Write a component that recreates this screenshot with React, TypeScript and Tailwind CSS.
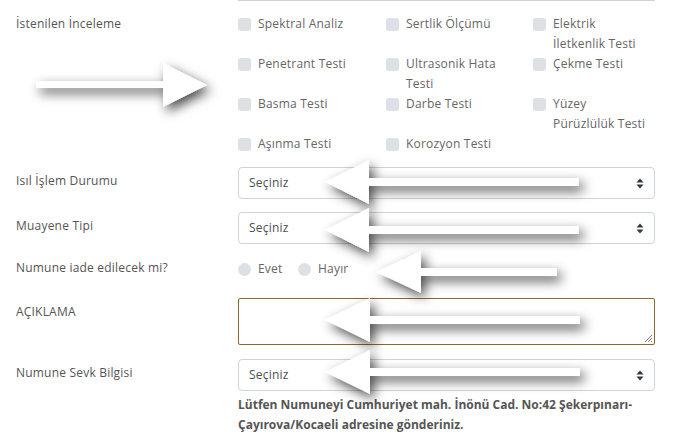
const checks: { label: string[]; h: string }[] = [
  { label: ["Spektral Analiz"], h: "h-[40px]" },
  { label: ["Sertlik Ölçümü"], h: "h-[40px]" },
  { label: ["Elektrik", "İletkenlik Testi"], h: "h-[40px]" },
  { label: ["Penetrant Testi"], h: "h-[40px]" },
  { label: ["Ultrasonik Hata", "Testi"], h: "h-[40px]" },
  { label: ["Çekme Testi"], h: "h-[40px]" },
  { label: ["Basma Testi"], h: "h-[40px]" },
  { label: ["Darbe Testi"], h: "h-[40px]" },
  { label: ["Yüzey", "Pürüzlülük Testi"], h: "h-[40px]" },
  { label: ["Aşınma Testi"], h: "h-[20px]" },
  { label: ["Korozyon Testi"], h: "h-[20px]" },
];

const SelectBox = () => (
  <div className="flex h-[32px] w-[417px] items-center justify-between rounded-[4px] border border-[#ced4da] bg-white pl-[10px] pr-[10px] text-[#495057]">
    <span>Seçiniz</span>
    <svg width="8" height="11" viewBox="0 0 8 11">
      <path d="M4 0.5 L7.5 4.5 L0.5 4.5 Z" fill="#343a40" />
      <path d="M4 10.5 L7.5 6.5 L0.5 6.5 Z" fill="#343a40" />
    </svg>
  </div>
);

const Label = ({ children, className = "" }: { children: React.ReactNode; className?: string }) => (
  <div className={`w-[222px] shrink-0 text-[#555] ${className}`}>{children}</div>
);

const leftArrow = (tip: number, cy: number, base: number, end: number, half = 22) =>
  `${tip},${cy} ${base},${cy - half} ${base},${cy - 4} ${end},${cy - 4} ${end},${cy + 4} ${base},${cy + 4} ${base},${cy + half}`;

export default function App() {
  return (
    <div
      className="relative h-[437px] w-[677px] overflow-hidden bg-white pl-[16px] text-[12px] leading-[20px] tracking-[0.2px]"
      style={{ fontFamily: '"Open Sans", "Noto Sans", sans-serif' }}
    >
      <div className="ml-[222px] w-[417px] border-t border-[#ced4da]" />

      <div className="mt-[13px] flex">
        <Label>İstenilen İnceleme</Label>
        <div className="grid w-[417px] grid-cols-[148px_147px_1fr]">
          {checks.map((c) => (
            <div key={c.label.join(" ")} className={`flex gap-[7px] ${c.h}`}>
              <span className="mt-[4px] h-[13px] w-[13px] shrink-0 rounded-[3px] bg-[#dde1e6]" />
              <span className="text-[#666]">
                {c.label.map((l) => (
                  <div key={l}>{l}</div>
                ))}
              </span>
            </div>
          ))}
        </div>
      </div>

      <div className="mt-[13px] flex">
        <Label className="pt-[4px]">Isıl İşlem Durumu</Label>
        <SelectBox />
      </div>

      <div className="mt-[13px] flex">
        <Label className="pt-[4px]">Muayene Tipi</Label>
        <SelectBox />
      </div>

      <div className="mt-[13px] flex">
        <Label className="pt-[1px]">Numune iade edilecek mi?</Label>
        <div className="flex items-center pt-[2px] text-[#666]">
          <span className="h-[13px] w-[13px] rounded-full bg-[#dde1e6]" />
          <span className="ml-[7px] w-[40px]">Evet</span>
          <span className="h-[13px] w-[13px] rounded-full bg-[#dde1e6]" />
          <span className="ml-[7px]">Hayır</span>
        </div>
      </div>

      <div className="mt-[19px] flex">
        <Label className="pt-[4px]">AÇIKLAMA</Label>
        <div className="relative h-[47px] w-[417px] rounded-[2px] border border-[#8a6a2c] bg-white">
          <svg className="absolute bottom-[1px] right-[1px]" width="10" height="10" viewBox="0 0 10 10">
            <path d="M9 2 L2 9 M9 5 L5 9 M9 8 L8 9" stroke="#777" strokeWidth="1" />
          </svg>
        </div>
      </div>

      <div className="mt-[14px] flex">
        <Label className="pt-[4px]">Numune Sevk Bilgisi</Label>
        <SelectBox />
      </div>

      <div className="ml-[222px] mt-[4px] w-[420px] font-bold tracking-normal text-[#555]">
        Lütfen Numuneyi Cumhuriyet mah. İnönü Cad. No:42 Şekerpınarı-
        <br />
        Çayırova/Kocaeli adresine gönderiniz.
      </div>

      <svg className="pointer-events-none absolute left-0 top-0" width="677" height="437" viewBox="0 0 677 437">
        <defs>
          <filter id="sh" x="-30%" y="-80%" width="160%" height="260%">
            <feDropShadow dx="4" dy="5" stdDeviation="6" floodColor="#000" floodOpacity="0.7" />
          </filter>
        </defs>
        <g fill="#fff" filter="url(#sh)">
          <polygon points="36,81 163,81 163,63 207,85 163,107 163,88 36,88" />
          <polygon points={leftArrow(325, 182, 369, 579)} />
          <polygon points={leftArrow(325, 230, 369, 579)} />
          <polygon points={leftArrow(376, 272, 421, 557, 21)} />
          <polygon points={leftArrow(325, 320, 370, 580)} />
          <polygon points={leftArrow(325, 372, 370, 580)} />
        </g>
      </svg>
    </div>
  );
}
